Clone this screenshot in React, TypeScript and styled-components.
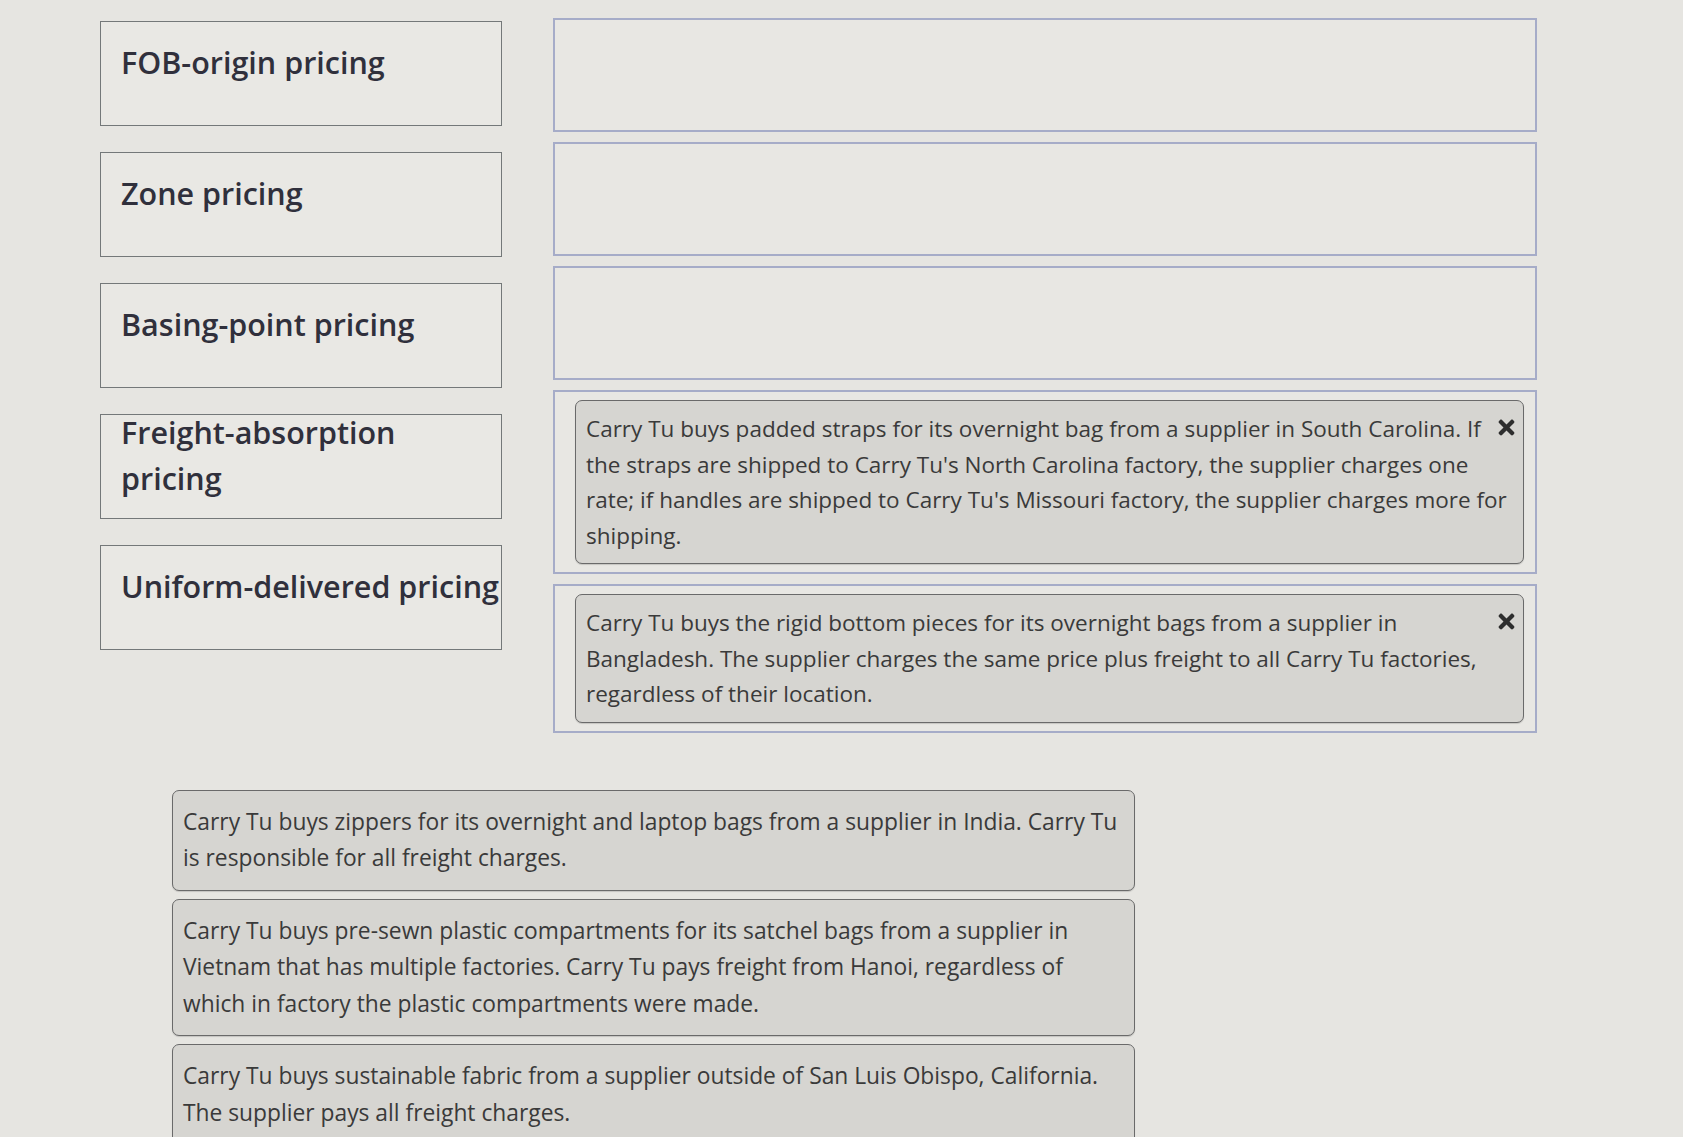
import React from "react";
import styled, { createGlobalStyle } from "styled-components";
import { FaTimes } from "react-icons/fa";

const Global = createGlobalStyle`
  html, body {
    margin: 0;
    padding: 0;
    background: #e6e5e1;
    font-family: "Open Sans", "Liberation Sans", sans-serif;
    overflow: hidden;
  }
`;

const Page = styled.div`
  width: 1683px;
  height: 1137px;
  background: #e6e5e1;
  box-sizing: border-box;
  padding-top: 18px;
`;

const Matching = styled.div`
  display: flex;
  align-items: flex-start;
  gap: 51px;
  padding-left: 100px;
`;

const LabelColumn = styled.div`
  display: flex;
  flex-direction: column;
  gap: 26px;
  width: 402px;
  margin-top: 3px;
`;

const Label = styled.div`
  box-sizing: border-box;
  height: 105px;
  display: flex;
  align-items: center;
  padding: 0 20px 23px 20px;
  border: 1.5px solid #747879;
  background: #e9e8e4;
  color: #30303c;
  font-size: 30.5px;
  font-weight: 600;
  line-height: 46px;
`;

const LabelText = styled.span`
  white-space: pre;
`;

const ZoneColumn = styled.div`
  display: flex;
  flex-direction: column;
  gap: 10px;
  width: 984px;
`;

const Zone = styled.div`
  box-sizing: border-box;
  min-height: 114px;
  padding: 8px 11px 8px 20px;
  border: 2px solid #a6acc8;
  background: #e8e7e3;
`;

const Card = styled.div<{ $placed?: boolean }>`
  box-sizing: border-box;
  padding: ${(p) => (p.$placed ? "10px" : "13px 10px")};
  border: 1.5px solid #6a6a6a;
  border-radius: 7px;
  background: #d6d5d1;
  color: #3a3a3a;
  font-size: ${(p) => (p.$placed ? "22.5px" : "22.8px")};
  line-height: ${(p) => (p.$placed ? "35.5px" : "36.5px")};
  box-shadow: 0 1px 1px rgba(0, 0, 0, 0.15);
`;

const Remove = styled.button`
  float: right;
  width: 24px;
  height: 24px;
  margin: 4px -5px 0 5px;
  padding: 0;
  border: none;
  background: transparent;
  color: #2e2e2e;
  display: flex;
  align-items: center;
  justify-content: center;
  cursor: pointer;
`;

const Pool = styled.div`
  display: flex;
  flex-direction: column;
  gap: 8px;
  width: 963px;
  margin: 57px 0 0 172px;
`;

const labels = [
  "FOB-origin pricing",
  "Zone pricing",
  "Basing-point pricing",
  "Freight-absorption\npricing",
  "Uniform-delivered pricing",
];

const placed: (string | null)[] = [
  null,
  null,
  null,
  "Carry Tu buys padded straps for its overnight bag from a supplier in South Carolina. If the straps are shipped to Carry Tu's North Carolina factory, the supplier charges one rate; if handles are shipped to Carry Tu's Missouri factory, the supplier charges more for shipping.",
  "Carry Tu buys the rigid bottom pieces for its overnight bags from a supplier in Bangladesh. The supplier charges the same price plus freight to all Carry Tu factories, regardless of their location.",
];

const pool = [
  "Carry Tu buys zippers for its overnight and laptop bags from a supplier in India. Carry Tu is responsible for all freight charges.",
  "Carry Tu buys pre-sewn plastic compartments for its satchel bags from a supplier in Vietnam that has multiple factories. Carry Tu pays freight from Hanoi, regardless of which in factory the plastic compartments were made.",
  "Carry Tu buys sustainable fabric from a supplier outside of San Luis Obispo, California. The supplier pays all freight charges.",
];

export default function App() {
  return (
    <Page>
      <Global />
      <Matching>
        <LabelColumn>
          {labels.map((l) => (
            <Label key={l}>
              <LabelText>{l}</LabelText>
            </Label>
          ))}
        </LabelColumn>
        <ZoneColumn>
          {placed.map((p, i) => (
            <Zone key={i}>
              {p && (
                <Card $placed>
                  <Remove aria-label="Remove">
                    <FaTimes size={23} />
                  </Remove>
                  {p}
                </Card>
              )}
            </Zone>
          ))}
        </ZoneColumn>
      </Matching>
      <Pool>
        {pool.map((t) => (
          <Card key={t}>{t}</Card>
        ))}
      </Pool>
    </Page>
  );
}
